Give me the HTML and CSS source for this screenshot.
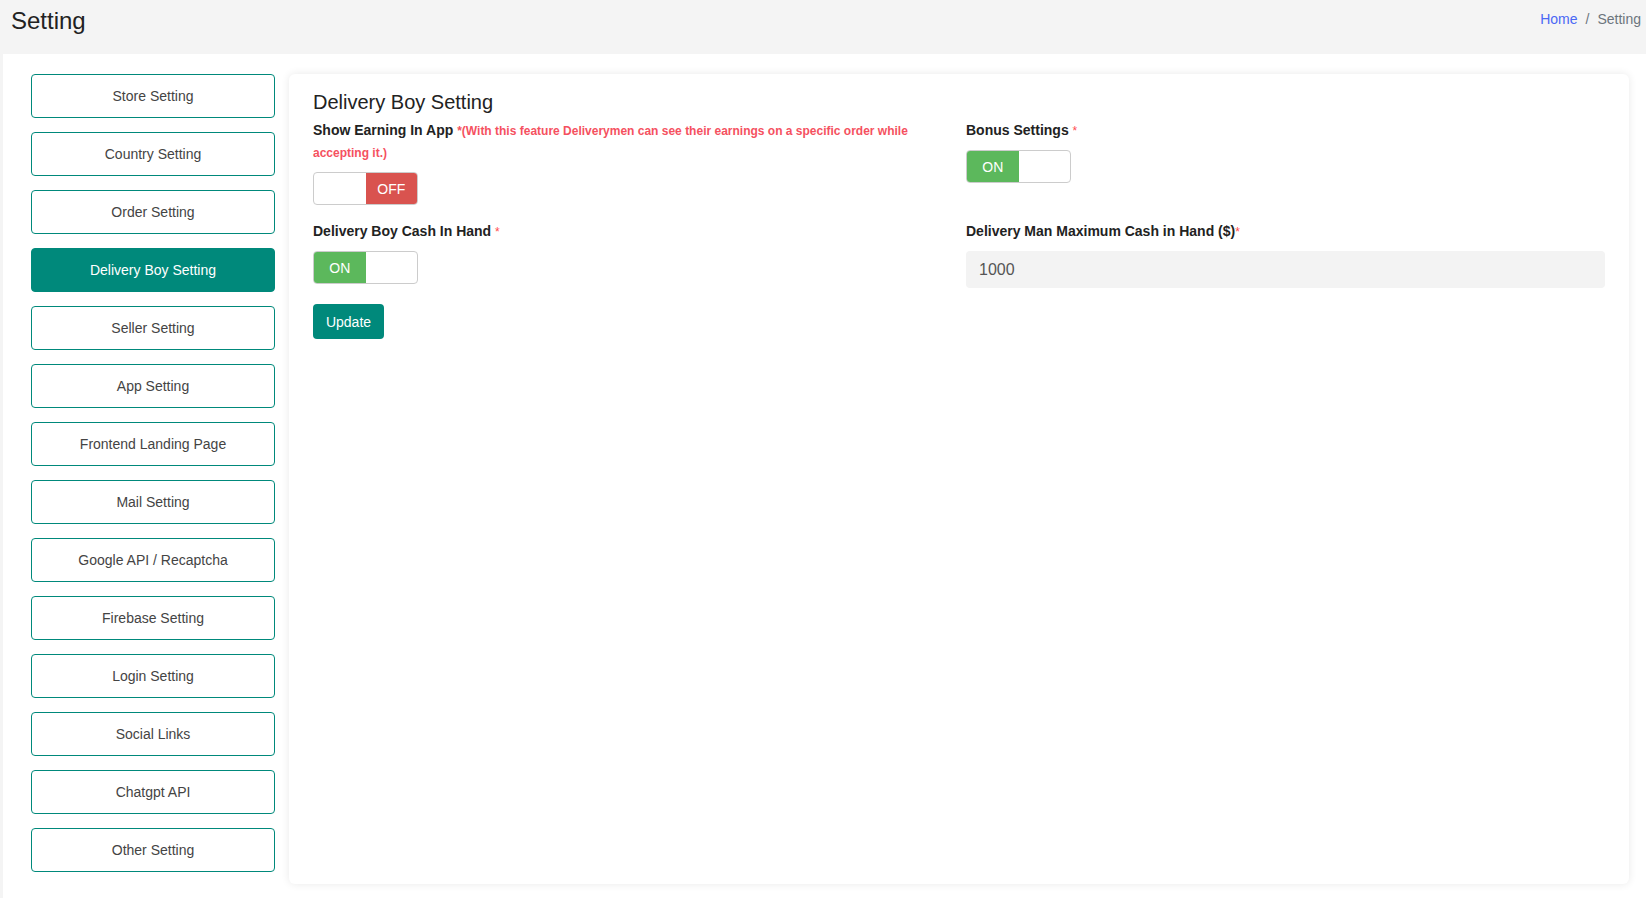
FILE: index.html
```html
<!DOCTYPE html>
<html lang="en">
<head>
<meta charset="utf-8">
<title>Setting</title>
<link rel="stylesheet" href="styles.css">
</head>
<body>
<header class="page-header">
  <h1 class="page-title">Setting</h1>
  <nav class="breadcrumb">
    <a class="crumb-link" href="#">Home</a>
    <span class="crumb-sep">/</span>
    <span class="crumb-current">Setting</span>
  </nav>
</header>
<main class="panel">
  <aside class="side-nav">
    <a class="nav-btn" href="#">Store Setting</a>
    <a class="nav-btn" href="#">Country Setting</a>
    <a class="nav-btn" href="#">Order Setting</a>
    <a class="nav-btn active" href="#">Delivery Boy Setting</a>
    <a class="nav-btn" href="#">Seller Setting</a>
    <a class="nav-btn" href="#">App Setting</a>
    <a class="nav-btn" href="#">Frontend Landing Page</a>
    <a class="nav-btn" href="#">Mail Setting</a>
    <a class="nav-btn" href="#">Google API / Recaptcha</a>
    <a class="nav-btn" href="#">Firebase Setting</a>
    <a class="nav-btn" href="#">Login Setting</a>
    <a class="nav-btn" href="#">Social Links</a>
    <a class="nav-btn" href="#">Chatgpt API</a>
    <a class="nav-btn" href="#">Other Setting</a>
  </aside>
  <section class="card">
    <h2 class="card-title">Delivery Boy Setting</h2>
    <div class="form-grid">
      <div class="field">
        <label class="field-label">Show Earning In App <span class="note">*(With this feature Deliverymen can see their earnings on a specific order while accepting it.)</span></label>
        <div class="toggle">
          <span class="toggle-half"></span>
          <span class="toggle-half off">OFF</span>
        </div>
      </div>
      <div class="field">
        <label class="field-label">Bonus Settings <span class="req">*</span></label>
        <div class="toggle">
          <span class="toggle-half on">ON</span>
          <span class="toggle-half"></span>
        </div>
      </div>
      <div class="field">
        <label class="field-label">Delivery Boy Cash In Hand <span class="req">*</span></label>
        <div class="toggle">
          <span class="toggle-half on">ON</span>
          <span class="toggle-half"></span>
        </div>
      </div>
      <div class="field">
        <label class="field-label">Delivery Man Maximum Cash in Hand ($)<span class="req">*</span></label>
        <input class="text-input" type="text" value="1000">
      </div>
    </div>
    <button class="btn-update" type="button">Update</button>
  </section>
</main>
</body>
</html>
```

FILE: styles.css
```css
* {
  box-sizing: border-box;
}

html, body {
  margin: 0;
  padding: 0;
}

body {
  background: #f4f4f4;
  font-family: "Liberation Sans", Arial, sans-serif;
  color: #222;
  overflow: hidden;
  height: 100vh;
}

.page-header {
  height: 54px;
  display: flex;
  justify-content: space-between;
  align-items: flex-start;
  padding: 6px 5px 0 11px;
}

.page-title {
  margin: 0;
  font-size: 24px;
  line-height: 30px;
  font-weight: 400;
  color: #222;
}

.breadcrumb {
  margin-top: 2.5px;
  font-size: 14px;
  line-height: 21px;
  display: flex;
  gap: 8px;
}

.crumb-link {
  color: #4a68f5;
  text-decoration: none;
}

.crumb-sep,
.crumb-current {
  color: #6c757d;
}

.panel {
  margin-left: 3px;
  background: #fff;
  display: flex;
  align-items: flex-start;
  gap: 14px;
  padding: 20px 17px 0 28px;
  height: calc(100vh - 54px);
  overflow: hidden;
}

.side-nav {
  width: 244px;
  flex: none;
  display: flex;
  flex-direction: column;
  gap: 14px;
}

.nav-btn {
  height: 44px;
  display: flex;
  align-items: center;
  justify-content: center;
  border: 1px solid #00897b;
  border-radius: 4px;
  font-size: 14px;
  color: #444;
  text-decoration: none;
  background: #fff;
}

.nav-btn.active {
  background: #00897b;
  color: #fff;
}

.card {
  flex: 1;
  height: 810px;
  background: #fff;
  border-radius: 6px;
  box-shadow: 0 0 8px rgba(0, 0, 0, 0.09);
  padding: 17px 24px 24px 24px;
}

.card-title {
  margin: 0 0 7px 0;
  font-size: 20px;
  line-height: 22px;
  font-weight: 400;
  color: #222;
}

.form-grid {
  display: grid;
  grid-template-columns: 1fr 1fr;
  column-gap: 14px;
  row-gap: 16px;
  align-items: start;
}

.field {
  display: flex;
  flex-direction: column;
  align-items: flex-start;
}

.field-label {
  display: block;
  font-size: 14px;
  line-height: 21px;
  font-weight: 700;
  color: #222;
  margin-bottom: 8px;
}

.note {
  font-size: 12px;
  color: #f5515f;
  font-weight: 700;
}

.req {
  font-size: 12px;
  color: #ff4d4f;
  font-weight: 400;
}

.toggle {
  width: 105px;
  height: 33px;
  border: 1px solid #ccc;
  border-radius: 4px;
  display: flex;
  overflow: hidden;
  background: #fff;
}

.toggle-half {
  flex: 1;
  display: flex;
  align-items: center;
  justify-content: center;
  font-size: 14px;
  color: #fff;
}

.toggle-half.on {
  background: #5cb85c;
}

.toggle-half.off {
  background: #d9534f;
}

.text-input {
  width: 100%;
  height: 37px;
  border: none;
  border-radius: 4px;
  background: #f3f3f3;
  padding: 0 13px;
  font-family: "Liberation Sans", Arial, sans-serif;
  font-size: 16px;
  color: #555;
  outline: none;
}

.btn-update {
  margin-top: 16px;
  height: 35px;
  width: 71px;
  border: none;
  border-radius: 4px;
  background: #00897b;
  color: #fff;
  font-family: "Liberation Sans", Arial, sans-serif;
  font-size: 14px;
  padding: 0;
}
```
